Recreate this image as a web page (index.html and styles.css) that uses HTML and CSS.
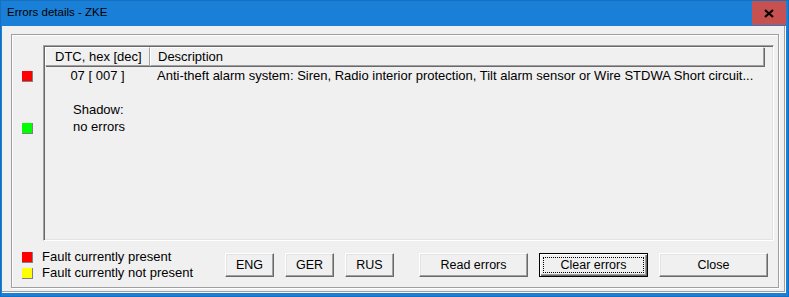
FILE: index.html
```html
<!DOCTYPE html>
<html lang="en">
<head>
  <meta charset="UTF-8" />
  <title>Errors details - ZKE</title>
  <link rel="stylesheet" href="styles.css">
</head>
<body>
  <div class="window">
    <div class="titlebar">
      <span class="title">Errors details - ZKE</span>
      <button class="close-x" aria-label="Close">
        <svg width="10" height="9" viewBox="0 0 10 9"><path d="M1 1 L9 8 M9 1 L1 8" stroke="#000" stroke-width="2.2" fill="none"/></svg>
      </button>
    </div>
    <div class="client">
      <div class="groupbox">
        <div class="top-area">
          <div class="markers">
            <span class="mark red m-first"></span>
            <span class="mark green m-shadow"></span>
          </div>
          <div class="list">
            <div class="list-header">
              <div class="hcell c-dtc">DTC, hex [dec]</div>
              <div class="hcell c-desc">Description</div>
              <div class="hcell c-rest"></div>
            </div>
            <div class="row">
              <div class="cell c-dtc center">07 [ 007 ]</div>
              <div class="cell c-desc">Anti-theft alarm system: Siren, Radio interior protection, Tilt alarm sensor or Wire STDWA Short circuit...</div>
            </div>
            <div class="row"></div>
            <div class="row"><div class="cell c-dtc indent">Shadow:</div></div>
            <div class="row"><div class="cell c-dtc indent">no errors</div></div>
          </div>
        </div>
        <div class="footer">
          <div class="legend">
            <div class="legend-line"><span class="mark red"></span>Fault currently present</div>
            <div class="legend-line"><span class="mark yellow"></span>Fault currently not present</div>
          </div>
          <div class="buttons">
            <button class="btn small">ENG</button>
            <button class="btn small">GER</button>
            <button class="btn small">RUS</button>
            <button class="btn wide push">Read errors</button>
            <button class="btn wide default"><span class="focus">Clear errors</span></button>
            <button class="btn wide">Close</button>
          </div>
        </div>
      </div>
    </div>
  </div>
</body>
</html>
```

FILE: styles.css
```css
html, body {
  margin: 0;
  padding: 0;
}
body {
  font-family: "Liberation Sans", Arial, sans-serif;
  font-size: 13px;
  color: #000;
}
.window {
  width: 789px;
  height: 297px;
  box-sizing: border-box;
  background: #1a7fd6;
  border: 1px solid #1670c0;
  display: flex;
  flex-direction: column;
}
.titlebar {
  height: 25px;
  display: flex;
  justify-content: space-between;
  align-items: flex-start;
}
.title {
  font-size: 11.5px;
  padding: 5px 0 0 6px;
}
.close-x {
  width: 34px;
  height: 24px;
  margin-right: 2px;
  border: none;
  background: #c75050;
  display: flex;
  align-items: center;
  justify-content: center;
  padding: 0;
}
.client {
  flex: 1;
  margin: 0 2px 3px 1px;
  background: #f0f0f0;
  border-right: 1px solid #fff;
  border-bottom: 1px solid #fff;
  box-shadow: inset -1px -1px 0 #a0a0a0;
  padding: 8px 8px 4px 9px;
  display: flex;
}
.groupbox {
  flex: 1;
  border: 1px solid #a0a0a0;
  box-shadow: inset 1px 1px 0 #fff, 1px 1px 0 #fff;
  padding: 10px 4px 6px 10px;
  display: flex;
  flex-direction: column;
}
.top-area {
  display: flex;
  height: 196px;
}
.markers {
  width: 21px;
  flex: none;
  display: flex;
  flex-direction: column;
}
.mark {
  display: inline-block;
  width: 10px;
  height: 10px;
  border-right: 1px solid #808080;
  border-bottom: 1px solid #808080;
  flex: none;
}
.red { background: #ff0000; }
.green { background: #00ff00; }
.yellow { background: #ffff00; }
.m-first { margin-top: 26px; }
.m-shadow { margin-top: 41px; }
.list {
  flex: 1;
  border-top: 1px solid #a0a0a0;
  border-left: 1px solid #a0a0a0;
  border-right: 1px solid #fff;
  border-bottom: 1px solid #fff;
  box-shadow: inset 1px 1px 0 #696969, inset -1px -1px 0 #e3e3e3;
  padding: 1px;
  background: #f0f0f0;
}
.list-header {
  display: flex;
  height: 19px;
  margin-bottom: 1px;
}
.hcell {
  box-sizing: border-box;
  height: 19px;
  line-height: 17px;
  padding-left: 8px;
  border-top: 1px solid #fff;
  border-left: 1px solid #fff;
  border-right: 1px solid #a0a0a0;
  border-bottom: 1px solid #a0a0a0;
  box-shadow: 1px 1px 0 #696969;
  white-space: nowrap;
}
.c-dtc {
  width: 105px;
  flex: none;
  box-sizing: border-box;
}
.hcell.c-dtc { padding-left: 9px; }
.c-desc {
  width: 614px;
  flex: none;
  box-sizing: border-box;
}
.hcell.c-desc { padding-left: 7px; }
.c-rest {
  flex: 1;
  border: none;
  box-shadow: none;
}
.row {
  display: flex;
  height: 17px;
  line-height: 17px;
}
.cell {
  white-space: nowrap;
  overflow: hidden;
}
.cell.c-desc { padding-left: 7px; }
.center { text-align: center; }
.indent { padding-left: 28px; }
.footer {
  display: flex;
  margin-top: 8px;
}
.legend {
  width: 203px;
  flex: none;
}
.legend-line {
  height: 16px;
  line-height: 16px;
  display: flex;
  align-items: center;
  white-space: nowrap;
}
.legend-line .mark {
  margin-right: 9px;
}
.buttons {
  display: flex;
  gap: 11px;
  margin-top: 4px;
}
.btn {
  height: 24px;
  box-sizing: border-box;
  font-family: "Liberation Sans", Arial, sans-serif;
  font-size: 12.5px;
  background: #f0f0f0;
  border-top: 1px solid #fff;
  border-left: 1px solid #fff;
  border-right: 1px solid #696969;
  border-bottom: 1px solid #696969;
  box-shadow: inset -1px -1px 0 #a0a0a0, inset 1px 1px 0 #e3e3e3;
  padding: 0;
  color: #000;
}
.small { width: 49px; }
.wide { width: 109px; }
.push { margin-left: 14px; }
.default {
  border: 1px solid #000;
  box-shadow: inset 1px 1px 0 #fff, inset -1px -1px 0 #696969, inset -2px -2px 0 #a0a0a0;
  padding: 3px;
  display: flex;
}
.focus {
  flex: 1;
  border: 1px dotted #000;
  display: flex;
  align-items: center;
  justify-content: center;
}
```
